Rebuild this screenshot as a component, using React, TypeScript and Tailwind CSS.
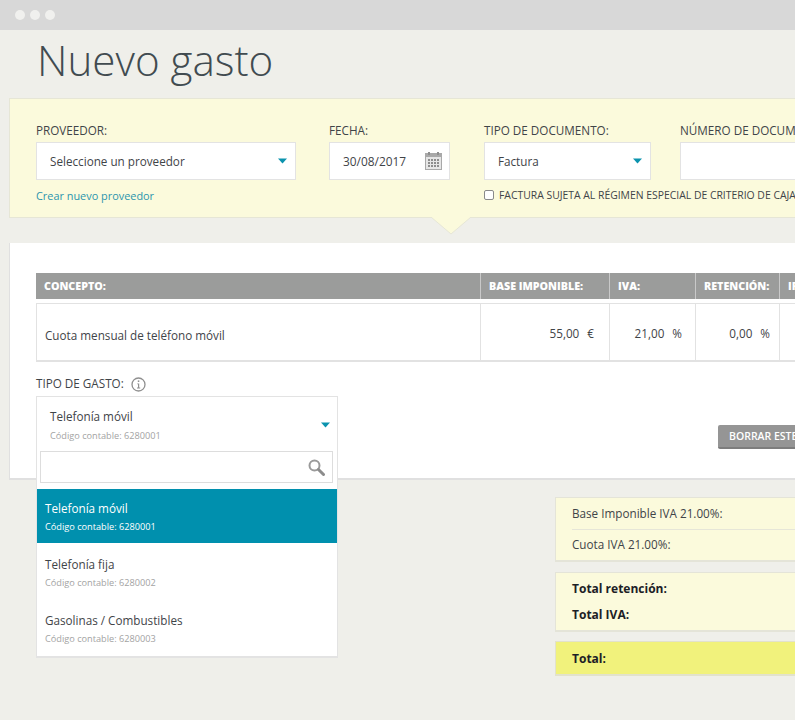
function Caret({ className }: { className: string }) {
  return (
    <svg className={className} width="9" height="6" viewBox="0 0 9 6">
      <path d="M0 0.5h9L4.5 5.5z" fill="#0b93ae" />
    </svg>
  );
}

function CalendarIcon() {
  return (
    <svg width="17" height="18" viewBox="0 0 17 18">
      <rect x="0" y="1" width="17" height="17" fill="#a9a9a9" />
      <rect x="1" y="5" width="15" height="12" fill="#e6e6e6" />
      <rect x="3" y="0" width="2" height="3" fill="#8f8f8f" />
      <rect x="12" y="0" width="2" height="3" fill="#8f8f8f" />
      {[7, 10, 13].map((y) =>
        [3, 6, 9, 12].map((x) => (
          <rect key={`${x}-${y}`} x={x} y={y} width="2" height="2" fill="#8d8d8d" />
        )),
      )}
    </svg>
  );
}

function InfoIcon() {
  return (
    <svg width="15" height="15" viewBox="0 0 15 15" fill="none">
      <circle cx="7.5" cy="7.5" r="6.5" stroke="#8f8f8f" strokeWidth="1.3" />
      <rect x="6.8" y="3.4" width="1.5" height="1.6" fill="#8f8f8f" />
      <path d="M6.2 6.4h2v4.1h1v.9H6v-.9h1V7.3h-.8z" fill="#8f8f8f" />
    </svg>
  );
}

function SearchIcon() {
  return (
    <svg width="17" height="17" viewBox="0 0 17 17" fill="none">
      <circle cx="6.5" cy="6.5" r="5" stroke="#9a9a9a" strokeWidth="2" />
      <path d="M10.5 10.5 15.5 15.5" stroke="#8c8c8c" strokeWidth="3" strokeLinecap="round" />
    </svg>
  );
}

const options = [
  { name: "Telefonía móvil", code: "Código contable: 6280001", active: true },
  { name: "Telefonía fija", code: "Código contable: 6280002", active: false },
  { name: "Gasolinas / Combustibles", code: "Código contable: 6280003", active: false },
];

function ExpenseDropdown() {
  return (
    <div className="absolute left-0 top-[21px] z-10 h-[262px] w-[302px] border border-[#e3e3e3] border-b-2 bg-white">
      <div className="relative h-[54px] pl-[13px] pt-[10px]">
        <p className="text-[11.7px] leading-[18px] text-[#3f4448]">Telefonía móvil</p>
        <p className="mt-[4px] text-[9.2px] leading-[14px] text-[#a3a3a3]">Código contable: 6280001</p>
        <Caret className="absolute right-[7px] top-[25px]" />
      </div>
      <div className="ml-[3px] mr-[4px] flex h-[32px] items-center justify-end border border-[#dddddd] pr-[7px]">
        <SearchIcon />
      </div>
      <ul className="mt-[6px]">
        {options.map((o) => (
          <li
            key={o.name}
            className={
              o.active
                ? "h-[54px] bg-[#0090ae] pl-[8px] pt-[10px] text-white"
                : "h-[56px] pl-[8px] pt-[12px] text-[#3f4448]"
            }
          >
            <p className="text-[11.7px] leading-[18px]">{o.name}</p>
            <p className={o.active ? "mt-[3px] text-[9.2px] leading-[14px]" : "mt-[3px] text-[9.2px] leading-[14px] text-[#a3a3a3]"}>
              {o.code}
            </p>
          </li>
        ))}
      </ul>
    </div>
  );
}

export default function App() {
  return (
    <div className="h-[720px] w-[795px] overflow-hidden bg-[#efefea] font-['Open_Sans',sans-serif]">
      <div className="flex h-[30px] items-center gap-[5px] bg-[#d8d8d8] pl-[15px]">
        <span className="h-[10px] w-[10px] rounded-full bg-[#f0f0ee]" />
        <span className="h-[10px] w-[10px] rounded-full bg-[#f0f0ee]" />
        <span className="h-[10px] w-[10px] rounded-full bg-[#f0f0ee]" />
      </div>

      <div className="w-[1000px]">
        <h1 className="h-[68px] pl-[37px] pt-[1px] text-[42.2px] font-light leading-[58px] text-[#414b50]">
          Nuevo gasto
        </h1>

        <section className="relative ml-[9px] h-[120px] border border-[#e6e6d6] bg-[#fbfadc] pl-[26px] pt-[22px]">
          <div className="flex">
            <div className="w-[260px]">
              <p className="text-[11.7px] leading-[18px] text-[#3f4448]">PROVEEDOR:</p>
              <div className="mt-[3px] flex h-[38px] items-center justify-between border border-[#e3e3e3] bg-white pl-[13px] pr-[8px]">
                <span className="pt-[1px] text-[11.7px] text-[#3f4448]">Seleccione un proveedor</span>
                <Caret className="" />
              </div>
              <a className="mt-[7px] block text-[10.9px] leading-[18px] text-[#2b95ad]">Crear nuevo proveedor</a>
            </div>
            <div className="ml-[33px] w-[121px]">
              <p className="text-[11.7px] leading-[18px] text-[#3f4448]">FECHA:</p>
              <div className="mt-[3px] flex h-[38px] items-center justify-between border border-[#e3e3e3] bg-white pl-[13px] pr-[7px]">
                <span className="pt-[1px] text-[11.9px] text-[#3f4448]">30/08/2017</span>
                <CalendarIcon />
              </div>
            </div>
            <div className="ml-[34px] w-[167px]">
              <p className="whitespace-nowrap text-[11.7px] leading-[18px] text-[#3f4448]">TIPO DE DOCUMENTO:</p>
              <div className="mt-[3px] flex h-[38px] items-center justify-between border border-[#e3e3e3] bg-white pl-[13px] pr-[8px]">
                <span className="pt-[1px] text-[11.7px] text-[#3f4448]">Factura</span>
                <Caret className="" />
              </div>
              <label className="mt-[7px] flex w-[400px] items-center gap-[5px] whitespace-nowrap text-[10.4px] leading-[16px] text-[#3f4448]">
                <span className="h-[10px] w-[10px] rounded-[2px] border border-[#8a8a8a] bg-white" />
                FACTURA SUJETA AL RÉGIMEN ESPECIAL DE CRITERIO DE CAJA
              </label>
            </div>
            <div className="ml-[29px] w-[220px]">
              <p className="whitespace-nowrap text-[11.7px] leading-[18px] text-[#3f4448]">NÚMERO DE DOCUMENTO:</p>
              <div className="mt-[3px] h-[38px] border border-[#e3e3e3] bg-white" />
            </div>
          </div>
          <svg className="absolute left-[421px] top-[118px]" width="40" height="18" viewBox="0 0 40 18">
            <path d="M0 0h40L20 17z" fill="#fbfadc" />
            <path d="M0 0 20 17 40 0" fill="none" stroke="#e6e6d6" />
          </svg>
        </section>

        <section className="ml-[9px] mt-[25px] h-[237px] border-l border-b-2 border-[#e0e0e0] bg-white pl-[26px] pt-[30px]">
          <div className="flex h-[26px] w-[960px] items-center bg-[#9b9c9b] text-[10.7px] font-extrabold text-white">
            <div className="flex h-full w-[444px] items-center pl-[8px]">CONCEPTO:</div>
            <div className="flex h-full w-[129px] items-center border-l border-[#c9c9c9] pl-[8px]">BASE IMPONIBLE:</div>
            <div className="flex h-full w-[86px] items-center border-l border-[#c9c9c9] pl-[8px]">IVA:</div>
            <div className="flex h-full w-[84px] items-center border-l border-[#c9c9c9] pl-[8px]">RETENCIÓN:</div>
            <div className="flex h-full w-[100px] items-center border-l border-[#c9c9c9] pl-[8px]">IRPF:</div>
          </div>
          <div className="mt-[4px] flex h-[59px] w-[960px] items-center border border-b-2 border-[#e2e2e2] text-[11.7px] text-[#3f4448]">
            <div className="flex h-full w-[443px] items-center pl-[8px] pt-[8px]">Cuota mensual de teléfono móvil</div>
            <div className="flex h-full w-[129px] items-center justify-end border-l border-[#e2e2e2] pr-[15px] pt-[4px]">
              <span>55,00</span>
              <span className="ml-[8px]">€</span>
            </div>
            <div className="flex h-full w-[86px] items-center justify-end border-l border-[#e2e2e2] pr-[13px] pt-[4px]">
              <span>21,00</span>
              <span className="ml-[8px]">%</span>
            </div>
            <div className="flex h-full w-[84px] items-center justify-end border-l border-[#e2e2e2] pr-[9px] pt-[4px]">
              <span>0,00</span>
              <span className="ml-[8px]">%</span>
            </div>
            <div className="h-full w-[100px] border-l border-[#e2e2e2]" />
          </div>

          <div className="relative mt-[13px] flex">
            <div className="flex h-[18px] items-center gap-[7px] text-[11.7px] text-[#3f4448]">
              TIPO DE GASTO:
              <InfoIcon />
            </div>
            <ExpenseDropdown />
            <button className="absolute left-[682px] top-[50px] h-[24px] w-[200px] rounded-[2px] border-b-2 border-[#7d7d7d] bg-[#959595] pl-[11px] pt-[2px] text-left text-[10.5px] font-semibold text-white">
              BORRAR ESTE CONCEPTO
            </button>
          </div>
        </section>

        <aside className="ml-[555px] mt-[17px] w-[400px] text-[11.7px] text-[#3f4448]">
          <div className="h-[65px] border border-b-2 border-[#e4e4d8] bg-[#fbfadc] pl-[16px]">
            <div className="flex h-[32px] items-center border-b border-[#e6e6d8] pt-[1px]">Base Imponible IVA 21.00%:</div>
            <div className="flex h-[30px] items-center">Cuota IVA 21.00%:</div>
          </div>
          <div className="mt-[10px] h-[60px] border border-b-2 border-[#e4e4d8] bg-[#fbfadc] pl-[16px] pt-[5px] text-[12px] font-bold text-[#1c2026]">
            <p className="leading-[22px]">Total retención:</p>
            <p className="mt-[4px] leading-[22px]">Total IVA:</p>
          </div>
          <div className="mt-[9px] flex h-[35px] items-center border border-b-2 border-[#e2e2cc] bg-[#f1f27c] pl-[16px] pt-[1px] text-[12px] font-bold text-[#1c2026]">
            Total:
          </div>
        </aside>
      </div>
    </div>
  );
}
